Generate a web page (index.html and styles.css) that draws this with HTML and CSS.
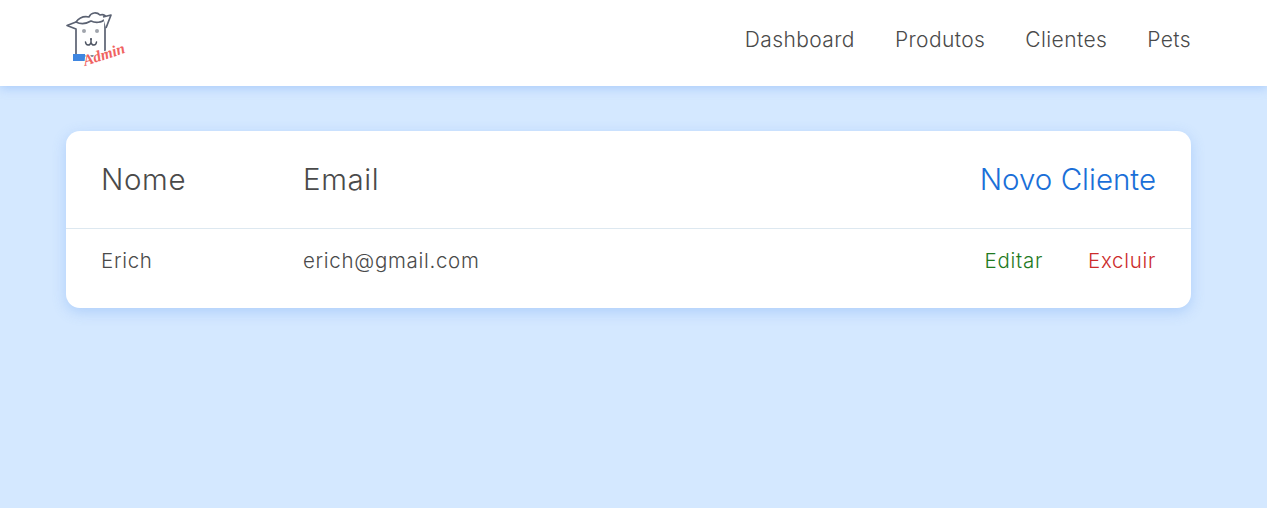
FILE: index.html
```html
<!DOCTYPE html>
<html lang="pt">
<head>
<meta charset="utf-8">
<title>Admin</title>
<link rel="stylesheet" href="styles.css">
</head>
<body>
<header class="topbar">
  <a class="logo" href="#">
    <svg width="62" height="60" viewBox="0 0 62 60" class="logo-svg">
      <path d="M10 14 L1 17.500 L10 21 V48 H39 V11" fill="#fff" stroke="#5b6272" stroke-width="1.700" stroke-linejoin="round"/>
      <path d="M10 14 C13 10 18 8 23 9 C25 4 31 4 34 7 C38 6 41 8 39 11 C36 15 29 15 25 13 C20 16 14 16 10 14 Z" fill="#fff" stroke="#5b6272" stroke-width="1.700" stroke-linejoin="round"/>
      <path d="M37 9 L45 7 L40 20" fill="#fff" stroke="#5b6272" stroke-width="1.700" stroke-linejoin="round"/>
      <circle cx="18" cy="23" r="2" fill="#a0a4ac"/>
      <circle cx="31" cy="23" r="2" fill="#a0a4ac"/>
      <circle cx="25" cy="31" r="1" fill="#5b6272"/>
      <path d="M19.500 34 C20 38 24 38 25 34.500 C26 38 30 38 30.500 34 M25 31 V34.500" fill="none" stroke="#4d5462" stroke-width="1.500" stroke-linecap="round"/>
      <rect x="7" y="46" width="12" height="7" fill="#3f86e0"/>
      <text x="19" y="58" class="logo-word" transform="rotate(-18 19 58)">Admin</text>
    </svg>
  </a>
  <nav class="nav">
    <a href="#">Dashboard</a>
    <a href="#">Produtos</a>
    <a href="#">Clientes</a>
    <a href="#">Pets</a>
  </nav>
</header>
<main class="content">
  <section class="card">
    <div class="row row-head">
      <span class="col-name">Nome</span>
      <span class="col-email">Email</span>
      <a class="new" href="#">Novo Cliente</a>
    </div>
    <div class="row row-body">
      <span class="col-name">Erich</span>
      <span class="col-email">erich@gmail.com</span>
      <span class="actions">
        <a class="edit" href="#">Editar</a>
        <a class="del" href="#">Excluir</a>
      </span>
    </div>
  </section>
</main>
</body>
</html>
```
FILE: styles.css
```css
* { box-sizing: border-box; }
html, body { height: 100%; }
body {
  margin: 0;
  background: #d4e8ff;
  color: #4a4a4a;
  font-family: "Inter", "Open Sans", sans-serif;
  font-weight: 300;
}
a { color: inherit; text-decoration: none; }
.topbar {
  height: 86px;
  background: #fff;
  box-shadow: 0 2px 10px rgba(90, 150, 240, .35);
  display: flex;
  align-items: center;
  justify-content: space-between;
  padding: 0 76px 0 66px;
}
.logo { display: block; height: 60px; margin-top: -10px; }
.logo-svg { display: block; overflow: visible; }
.logo-word {
  font-family: "Liberation Serif", serif;
  font-style: italic;
  font-size: 15.500px;
  font-weight: 700;
  fill: #f0635f;
  stroke: #fff;
  stroke-width: 2px;
  paint-order: stroke;
}
.nav {
  display: flex;
  gap: 40px;
  font-size: 21px;
  letter-spacing: .4px;
  padding-bottom: 8px;
}
.content { padding: 45px 76px 0 66px; }
.card {
  background: #fff;
  border-radius: 14px;
  box-shadow: 0 4px 14px rgba(90, 150, 240, .3);
  height: 177px;
}
.row { display: flex; align-items: center; padding: 0 35px; }
.row-head {
  height: 98px;
  border-bottom: 1px solid #dde8f0;
  font-size: 29.500px;
  letter-spacing: .6px;
  padding-bottom: 2px;
}
.row-body {
  height: 79px;
  font-size: 20.500px;
  letter-spacing: .7px;
  padding-bottom: 16px;
}
.col-name { width: 202px; }
.col-email { flex: 1; }
.new { color: #1a6fd8; letter-spacing: 0; }
.actions { display: flex; gap: 45px; }
.edit { color: #1f7a1f; }
.del { color: #cc2b2b; }
```
